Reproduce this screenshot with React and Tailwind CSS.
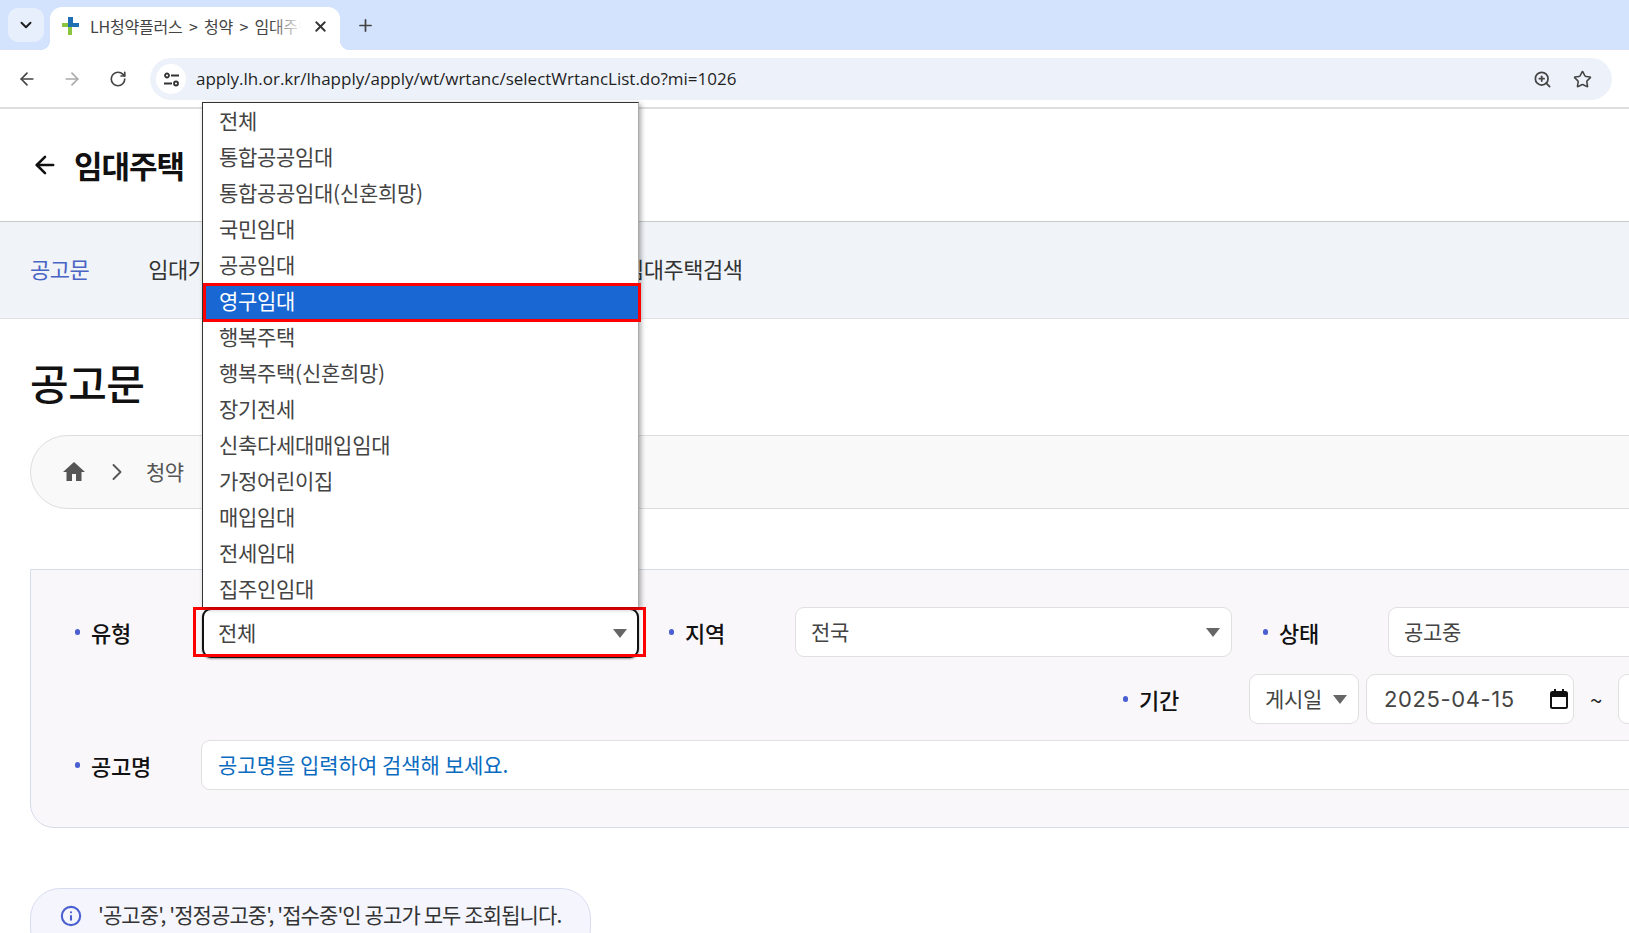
import { ArrowLeft, ArrowRight, RotateCw, X, Plus, ChevronDown, ChevronRight, Star, ZoomIn, Info } from "lucide-react"

const options = [
 "전체",
 "통합공공임대",
 "통합공공임대(신혼희망)",
 "국민임대",
 "공공임대",
 "영구임대",
 "행복주택",
 "행복주택(신혼희망)",
 "장기전세",
 "신축다세대매입임대",
 "가정어린이집",
 "매입임대",
 "전세임대",
 "집주인임대"
]

function Caret() {
 return <span className="w-0 h-0 border-x-[7px] border-x-transparent border-t-[9px] border-t-[#666] shrink-0" />
}

function Label({ children, className }) {
 return (
  <div className={"flex items-center gap-[11px] h-[50px] text-[22px] font-medium text-[#111] tracking-[-0.3px] shrink-0 " + className}>
   <span className="w-[5px] h-[6px] rounded-full bg-[#4a5fd0]" />
   {children}
  </div>
 )
}

function SelectBox({ text, className }) {
 return (
  <div className={"h-[50px] bg-white border border-[#e0e0e0] rounded-[9px] flex items-center justify-between pl-[15px] pr-[11px] text-[21px] text-[#444] tracking-[-0.3px] shrink-0 " + className}>
   <span>{text}</span>
   <Caret />
  </div>
 )
}

function ChromeBar() {
 return (
  <>
   <div className="h-[50px] bg-[#d3e3fd] flex items-start relative">
    <div className="ml-[8px] mt-[8px] w-[36px] h-[34px] rounded-[10px] bg-[#e8effc] flex items-center justify-center">
     <ChevronDown size={18} strokeWidth={2.6} className="text-[#1f1f1f]" />
    </div>
    <div className="ml-[6px] mt-[7px] w-[290px] h-[43px] bg-white rounded-t-[12px] flex items-center pl-[11px] pb-[5px] relative">
     <span className="absolute right-full bottom-0 w-[10px] h-[10px] bg-[radial-gradient(circle_at_0_0,transparent_10px,white_10.5px)]" />
     <span className="absolute left-full bottom-0 w-[10px] h-[10px] bg-[radial-gradient(circle_at_100%_0,transparent_10px,white_10.5px)]" />
     <svg width="20" height="20" viewBox="0 0 20 20" className="shrink-0">
      <path d="M7 7H1v4h6z" fill="#8cc63f" />
      <path d="M7 11h4v8H7z" fill="#8cc63f" />
      <path d="M7 1h5v6h6v4H7z" fill="#1f6fb5" />
     </svg>
     <span className="ml-[9px] w-[210px] overflow-hidden whitespace-nowrap text-[16px] text-[#444] tracking-[-0.2px] [word-spacing:3px]">LH청약플러스 &gt; 청약 &gt; 임대주택</span>
     <span className="absolute left-[222px] top-0 w-[30px] h-full bg-gradient-to-r from-white/0 to-white" />
     <X size={17} strokeWidth={2.6} className="ml-[12px] text-[#333]" />
    </div>
    <Plus size={19} strokeWidth={2.2} className="ml-[16px] mt-[16px] text-[#444]" />
   </div>
   <div className="h-[59px] bg-white border-b-2 border-[#dedede] flex items-center rounded-tl-[10px] pt-px">
    <ArrowLeft size={20} strokeWidth={2} className="ml-[17px] text-[#444]" />
    <ArrowRight size={20} strokeWidth={2} className="ml-[25px] text-[#aaa]" />
    <RotateCw size={18} strokeWidth={2.2} className="ml-[27px] text-[#444]" />
    <div className="ml-[23px] w-[1462px] h-[42px] rounded-full bg-[#edf2fa] flex items-center pl-[6px] pr-[20px]">
     <div className="w-[30px] h-[30px] rounded-full bg-white flex items-center justify-center">
      <svg width="17" height="17" viewBox="0 0 17 17" fill="none" stroke="#333" strokeWidth="1.8">
       <circle cx="4" cy="4.500" r="2" />
       <path d="M8 4.500h8M1 12.500h8" />
       <circle cx="13" cy="12.500" r="2" />
      </svg>
     </div>
     <span className="ml-[10px] flex-1 text-[17px] text-[#1f1f1f] font-['Open_Sans',sans-serif]">apply.lh.or.kr/lhapply/apply/wt/wrtanc/selectWrtancList.do?mi=1026</span>
     <ZoomIn size={19} strokeWidth={2.2} className="text-[#444]" />
     <Star size={19} strokeWidth={2} className="ml-[21px] text-[#444]" />
    </div>
   </div>
  </>
 )
}

export default function App() {
 return (
  <div className="relative w-[1629px] h-[933px] overflow-hidden bg-white font-['Noto_Sans_CJK_KR',sans-serif]">
   <ChromeBar />

   <div className="h-[113px] flex items-center pl-[31px] border-b border-[#c9c9c9]">
    <ArrowLeft size={28} strokeWidth={2.2} className="text-[#111]" />
    <span className="ml-[15px] text-[31px] font-bold text-[#111] tracking-[-1px]">임대주택</span>
   </div>

   <nav className="h-[97px] bg-[#f0f3f8] border-b border-[#e2e2e2] flex items-center pl-[30px] pb-[4px] text-[22px] tracking-[-0.5px] text-[#333]">
    <span className="text-[#4a64c4]">공고문</span>
    <span className="ml-[59px]">임대가이드</span>
    <span className="ml-[377px]">임대주택검색</span>
   </nav>

   <h1 className="ml-[30px] mt-[35px] text-[42px] leading-[56px] font-medium text-[#111] tracking-[-0.5px]">공고문</h1>

   <div className="ml-[30px] mt-[25px] w-[1700px] h-[74px] rounded-[37px] bg-[#f9f9f9] border border-[#dedede] flex items-center pl-[31px] text-[20px] text-[#555]">
    <svg width="24" height="24" viewBox="0 0 24 24" fill="#555"><path d="M10 21v-7h4v7h5.500v-9H23L12 2 1 12h3.500v9z" /></svg>
    <ChevronRight size={28} strokeWidth={1.6} className="ml-[17px] text-[#555]" />
    <span className="ml-[15px] text-[21px] tracking-[-0.5px]">청약</span>
   </div>

   <section className="ml-[30px] mt-[60px] w-[1800px] h-[259px] bg-[#f9f7f9] border border-[#d5dbe8] rounded-bl-[24px] pl-[44px] pt-[37px] flex flex-col gap-[16px]">
    <div className="flex items-start">
     <Label className="w-[127px]">유형</Label>
     <div className="relative mt-px h-[50px] w-[437px] bg-white border-2 border-[#111] rounded-[9px] flex items-center justify-between pl-[14px] pr-[10px] text-[21px] text-[#444] tracking-[-0.3px] shadow-[0_1px_2px_#0006]">
      <span>전체</span>
      <Caret />
      <span className="absolute -left-[11px] -top-[3px] w-[453px] h-[50px] border-[3px] border-[#f00]" />
     </div>
     <Label className="w-[126px] ml-[30px]">지역</Label>
     <SelectBox text="전국" className="w-[437px]" />
     <Label className="w-[125px] ml-[31px]">상태</Label>
     <SelectBox text="공고중" className="w-[437px]" />
    </div>

    <div className="flex items-start pl-[1048px]">
     <Label className="w-[126px]">기간</Label>
     <SelectBox text="게시일" className="w-[110px] gap-[6px]" />
     <div className="ml-[7px] w-[208px] h-[50px] bg-white border border-[#e0e0e0] rounded-[9px] flex items-center justify-between pl-[17px] pr-[5px] font-['Inter',sans-serif] text-[22px] text-[#444] tracking-[0.6px]">
      2025-04-15
      <svg width="18" height="20" viewBox="0 0 18 20" fill="none" stroke="#111" strokeWidth="2" className="shrink-0">
       <rect x="1" y="3" width="16" height="16" rx="1.500" />
       <path d="M1 6h16" strokeWidth="4" />
       <path d="M5 0v3M13 0v3" />
      </svg>
     </div>
     <span className="ml-[16px] h-[50px] flex items-center text-[22px] text-[#222]">~</span>
     <div className="ml-[16px] w-[208px] h-[50px] bg-white border border-[#e0e0e0] rounded-[9px]" />
    </div>

    <div className="flex items-start">
     <Label className="w-[126px]">공고명</Label>
     <div className="w-[1600px] h-[50px] bg-white border border-[#e0e0e0] rounded-[9px] flex items-center pl-[16px] text-[21px] text-[#0b6cbf]">공고명을 입력하여 검색해 보세요.</div>
    </div>
   </section>

   <div className="ml-[30px] mt-[60px] w-[561px] h-[70px] rounded-[30px] bg-[#f5f6fd] border border-[#d8dcf0] flex items-start pt-[10px] pl-[29px] text-[21px] text-[#333] tracking-[-0.9px]">
    <Info size={22} strokeWidth={2.3} className="text-[#4a5fd0] mt-[6px]" />
    <span className="ml-[16px]">'공고중', '정정공고중', '접수중'인 공고가 모두 조회됩니다.</span>
   </div>

   <div className="absolute left-[202px] top-[102px] w-[437px] h-[505px] bg-white border-t border-l border-[#333] border-r-[#aaa] border-r shadow-[2px_2px_5px_#0005] text-[21px] text-[#444] tracking-[-0.3px]">
    {options.map(o => (
     <div key={o} className={"relative h-[36px] flex items-center pl-[16px] " + (o === "영구임대" ? "bg-[#1967d2] text-white" : "")}>
      {o}
      {o === "영구임대" && <span className="absolute left-0 top-0 w-[438px] h-[39px] border-[3px] border-[#f00]" />}
     </div>
    ))}
   </div>
  </div>
 )
}
